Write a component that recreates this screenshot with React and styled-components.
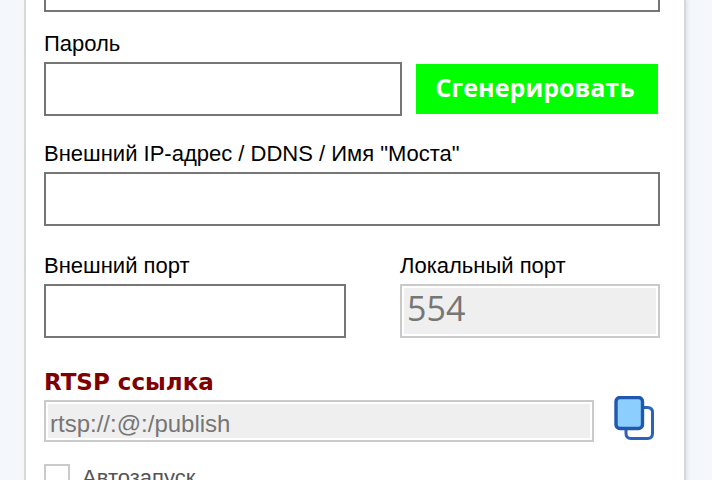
import React from 'react';
import styled, { createGlobalStyle } from 'styled-components';

const GlobalStyle = createGlobalStyle`
  *, *::before, *::after { box-sizing: border-box; }
  html { overflow: hidden; background: #fff; }
  body { margin: 0; overflow: hidden; font-family: "Liberation Sans", Arial, sans-serif; font-size: 22px; line-height: 28px; color: #000; }
`;

const Page = styled.div`
  display: flow-root;
  margin-right: 8px;
  padding: 0 26px 0 24px;
  background: #f4f7fb;
  height: 100vh;
  overflow: hidden;
`;

const Card = styled.main`
  display: flow-root;
  min-height: 100%;
  padding: 0 24px 0 18px;
  background: #fff;
  border: solid #d8d8d8;
  border-width: 0 2px;
  box-shadow: 2px 0 3px #e4e6ea;
`;

const Form = styled.form`
  display: flex;
  flex-direction: column;
  margin-top: -42px;
`;

const Field = styled.div`
  display: flex;
  flex-direction: column;
  min-width: 0;
  margin-top: ${(p) => p.$gap || 0}px;
`;

const Label = styled.label`
  height: 32px;
  line-height: 28px;
  white-space: nowrap;
`;

const LinkLabel = styled(Label)`
  font-family: "DejaVu Sans", Verdana, sans-serif;
  font-weight: 700;
  font-size: 23px;
  color: #800000;
`;

const Input = styled.input`
  width: 100%;
  height: 54px;
  padding: 2px 6px;
  border: 2px solid #767676;
  border-radius: 0;
  background: #fff;
  font: 24px "Liberation Sans", Arial, sans-serif;
`;

const ReadonlyInput = styled(Input)`
  padding: 0 4px;
  border-color: #cacaca;
  background: #efefef;
  box-shadow: inset 0 0 0 2px #fff;
  color: #767676;
  -webkit-text-fill-color: #767676;
  opacity: 1;
`;

const PortInput = styled(ReadonlyInput)`
  padding: 0 5px 6px;
  font: 34px "Open Sans", sans-serif;
`;

const LinkInput = styled(ReadonlyInput)`
  height: 42px;
  padding: 6px 4px 0;
`;

const PasswordRow = styled.div`
  display: grid;
  grid-template-columns: minmax(0, 1fr) 242px;
  column-gap: 14px;
  align-items: center;
  padding-right: 2px;
`;

const PortRow = styled.div`
  display: grid;
  grid-template-columns: minmax(0, 302fr) minmax(0, 260fr);
  column-gap: 54px;
  margin-top: 26px;
`;

const GenerateButton = styled.button`
  height: 50px;
  padding: 0 4px 4px 0;
  border: 0;
  background: #00ff00;
  color: #fff;
  font: 700 25px "Open Sans", sans-serif;
  cursor: pointer;
`;

const LinkRow = styled.div`
  display: grid;
  grid-template-columns: minmax(0, 1fr) 46px;
  column-gap: 20px;
`;

const CopyButton = styled.button`
  height: 44px;
  margin-top: -4px;
  padding: 0;
  border: 0;
  background: none;
  text-align: left;
  cursor: pointer;
  svg { display: block; }
`;

const CheckRow = styled.div`
  display: flex;
  align-items: flex-start;
  gap: 12px;
  margin-top: 22px;
  color: #545454;
`;

const Checkbox = styled.input`
  appearance: none;
  flex: none;
  width: 26px;
  height: 26px;
  margin: 0;
  border: 2px solid #cacaca;
  background: #fff;
`;

function CopyIcon() {
  return (
    <svg width="40" height="44" viewBox="0 0 40 44" fill="none" aria-hidden="true">
      <path d="M29 11.5H33.5Q38.5 11.5 38.5 16.5V37.5Q38.5 42.5 33.5 42.5H17Q12 42.5 12 37.5V31" stroke="#2d62b8" strokeWidth="3" />
      <rect x="2" y="1.5" width="26.5" height="31" rx="4" fill="#8ccfff" stroke="#2058b0" strokeWidth="3.4" />
    </svg>
  );
}

export default function App() {
  return (
    <>
      <GlobalStyle />
      <Page>
        <Card>
          <Form onSubmit={(e) => e.preventDefault()}>
            <Input type="text" aria-label="Логин" />
            <Field $gap={18}>
              <Label htmlFor="password">Пароль</Label>
              <PasswordRow>
                <Input id="password" type="password" />
                <GenerateButton type="button">Сгенерировать</GenerateButton>
              </PasswordRow>
            </Field>
            <Field $gap={24}>
              <Label htmlFor="host">Внешний IP-адрес / DDNS / Имя "Моста"</Label>
              <Input id="host" type="text" />
            </Field>
            <PortRow>
              <Field>
                <Label htmlFor="external-port">Внешний порт</Label>
                <Input id="external-port" type="text" />
              </Field>
              <Field>
                <Label htmlFor="local-port">Локальный порт</Label>
                <PortInput id="local-port" type="text" value="554" disabled />
              </Field>
            </PortRow>
            <Field $gap={30}>
              <LinkLabel htmlFor="rtsp-link">RTSP ссылка</LinkLabel>
              <LinkRow>
                <LinkInput id="rtsp-link" type="text" value="rtsp://:@:/publish" disabled />
                <CopyButton type="button" aria-label="Скопировать">
                  <CopyIcon />
                </CopyButton>
              </LinkRow>
            </Field>
            <CheckRow>
              <Checkbox id="autostart" type="checkbox" disabled />
              <Label htmlFor="autostart">Автозапуск</Label>
            </CheckRow>
          </Form>
        </Card>
      </Page>
    </>
  );
}
